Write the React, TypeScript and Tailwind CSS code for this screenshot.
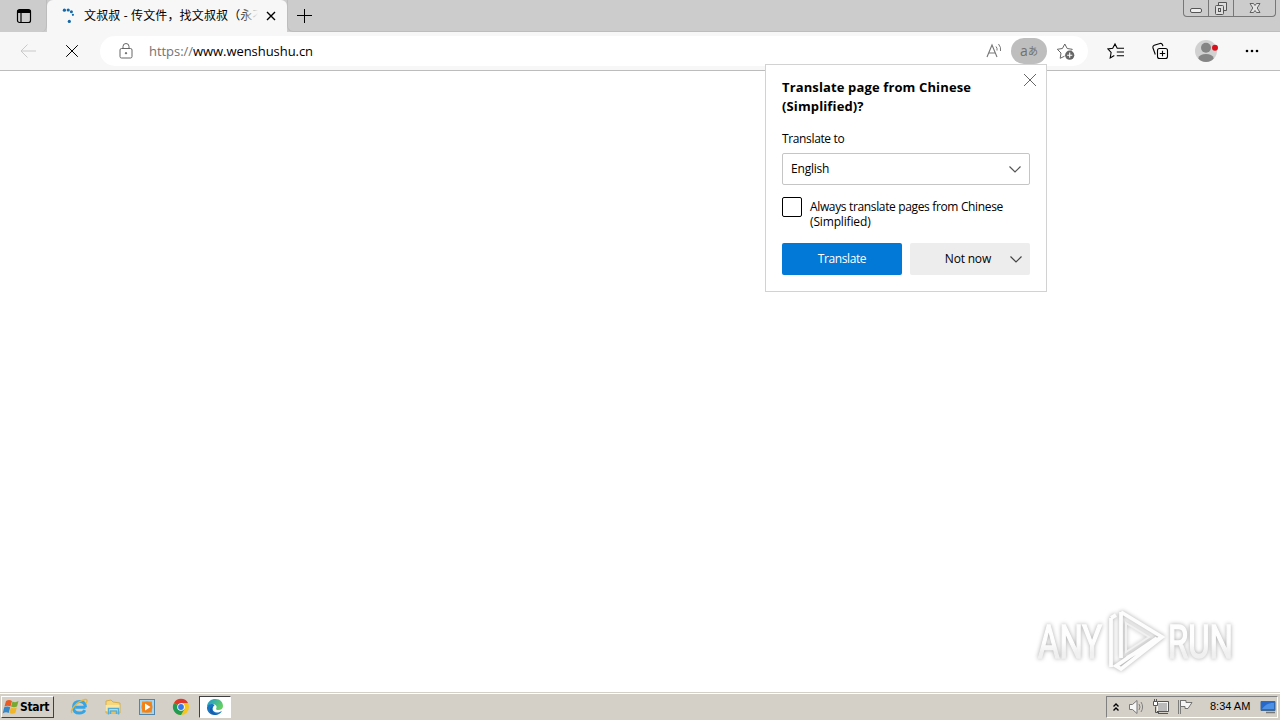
import type { ReactNode } from "react";

function Icon({
  size = 16,
  className = "",
  children,
}: {
  size?: number;
  className?: string;
  children: ReactNode;
}) {
  return (
    <svg
      width={size}
      height={size}
      viewBox={`0 0 ${size} ${size}`}
      fill="none"
      stroke="currentColor"
      className={`shrink-0 ${className}`}
    >
      {children}
    </svg>
  );
}

function TabStrip() {
  return (
    <div className="flex h-8 shrink-0 bg-[#cccccc]">
      <div className="flex w-[47px] items-center justify-center rounded-br-md border-r border-[#bdbdbd]">
        <Icon className="ml-px text-black">
          <rect x="1.5" y="1.5" width="13" height="13" rx="2" strokeWidth="1.2" />
          <path d="M1.5 3.5h13" strokeWidth="3" />
          <path d="M5 4v10" strokeWidth="1.2" />
        </Icon>
      </div>
      <div className="flex w-[240px] items-center rounded-t-md bg-[#f7f7f7] pl-3">
        <Icon className="text-[#1368aa]">
          <g fill="currentColor" stroke="none">
            <circle cx="5.4" cy="2.2" r="1.6" />
            <circle cx="9.2" cy="2" r="1.6" />
            <circle cx="12.4" cy="3.800" r="1.5" />
            <circle cx="13.900" cy="6.8" r="1.1" />
            <circle cx="10.3" cy="13.4" r="1.6" />
          </g>
        </Icon>
        <div className="relative ml-[9px] w-[174px] overflow-hidden text-[12px] leading-4 tracking-[0.15px] whitespace-nowrap text-black">
          文叔叔 - 传文件，找文叔叔（永不
          <span className="absolute inset-y-0 right-0 w-5 bg-linear-to-r from-[#f7f7f700] to-[#f7f7f7]" />
        </div>
        <Icon size={10} className="ml-2 text-black">
          <path d="M1 1l8 8M9 1L1 9" strokeWidth="1.4" />
        </Icon>
      </div>
      <div className="flex flex-1 items-start rounded-bl-md border-b border-l border-[#bdbdbd]">
        <Icon className="mt-2 ml-2 text-black">
          <path d="M8.5 1v14M1 7.500h15" strokeWidth="1" />
        </Icon>
      </div>
      <div className="flex w-[97px] items-start border-b border-[#bdbdbd]">
        <div className="flex h-[17px] w-[93px] rounded-b-[4px] border border-t-0 border-[#777] text-[#555]">
          <div className="flex w-[25px] justify-center border-r border-[#777]">
            <Icon>
              <rect x="2.5" y="8.5" width="11" height="4" rx="1.5" fill="#eee" />
            </Icon>
          </div>
          <div className="flex w-[25px] justify-center border-r border-[#777]">
            <Icon>
              <path d="M5.500 5.500v-3h8v8h-3" fill="#ddd" />
              <rect x="2.5" y="5.5" width="8" height="9" rx="1" fill="#ddd" />
              <rect x="5.500" y="8.500" width="2" height="3" />
            </Icon>
          </div>
          <div className="flex flex-1 justify-center">
            <Icon>
              <path
                d="M3 3.500h3.500L8 5.500l1.500-2H13L10.200 8l2.800 4.500H9.500L8 10.500l-1.500 2H3L5.800 8z"
                fill="#e4e4e4"
                strokeWidth=".9"
              />
            </Icon>
          </div>
        </div>
      </div>
    </div>
  );
}

function AddressBar() {
  return (
    <div className="flex h-[30px] w-[988px] items-center rounded-full bg-white pl-[18px]">
      <Icon className="text-[#666]">
        <rect x="2" y="5.500" width="12" height="9.500" rx="1.5" />
        <path d="M5 5.500V3.500a3 3 0 0 1 6 0v2" />
        <circle cx="8" cy="10.200" r=".7" fill="currentColor" />
      </Icon>
      <div className="mt-[2px] ml-[15px] w-[836px] text-[13px] tracking-[-0.05px] text-black">
        <span className="text-[#737373]">https://</span>www.wenshushu.cn
      </div>
      <Icon size={18} className="text-[#777]">
        <path d="M2 15L7 3l5 12M3.700 11h6.600" strokeWidth="1.1" />
        <path d="M11 4.500q1.500 1.800 1 4M13.500 2q2.800 3.200 2 7" />
      </Icon>
      <div className="ml-2 flex h-[26px] w-9 items-center justify-center rounded-full bg-[#bebebe] pb-px text-[#707070]">
        <span className="text-[14px]">a</span>
        <span className="mt-px text-[10px]">あ</span>
      </div>
      <Icon size={20} className="ml-[9px] text-[#666]">
        <path d="M8.500 15.200L4.200 17.300l.8-5.300-3.700-3.700 5.100-.8L8.800 3l2.400 4.500 5.100.8-1.200 1.200" />
        <circle cx="13.700" cy="14.200" r="4.600" fill="#666" stroke="none" />
        <path d="M13.700 11.600v5.200M11.100 14.200h5.200" stroke="#fff" strokeWidth="1.1" />
      </Icon>
    </div>
  );
}

function Toolbar() {
  return (
    <div className="flex h-[39px] shrink-0 items-center border-b border-[#bcbcbc] bg-[#f7f7f7]">
      <Icon className="ml-5 text-[#c9c9c9]">
        <path d="M16 8H1M7.500 1.500L1 8l6.500 6.500" />
      </Icon>
      <Icon className="mr-5 ml-7 text-black">
        <path d="M2.200 2.200l11.600 11.600M13.800 2.200L2.200 13.800" strokeWidth="1" />
      </Icon>
      <AddressBar />
      <Icon size={18} className="ml-[19px] text-black">
        <path
          d="M7.300 13.500L3.200 16l.9-5.500L1 7l4.700-.8L8 2l2.200 4.200H17M9.800 10H17M9.800 13.700H17"
          strokeWidth="1.1"
        />
      </Icon>
      <Icon size={18} className="ml-[26px] text-black">
        <rect x="6.500" y="6.500" width="10" height="10" rx="2" strokeWidth="1.1" />
        <path
          d="M11.500 8.800v5.400M8.800 11.500h5.400M4.300 12.500L1.900 5.800Q1.500 4 3.200 3.300L9 1.500q1.800-.4 2.500 1.300l.4 1.400"
          strokeWidth="1.1"
        />
      </Icon>
      <Icon size={24} className="ml-[25px]">
        <circle cx="12" cy="12" r="11" fill="#d1d1d1" stroke="none" />
        <circle cx="12" cy="8.800" r="5" fill="#858585" stroke="none" />
        <path d="M4.200 19.200Q6 15 12 15t7.800 4.200Q17 23 12 23t-7.800-3.800z" fill="#858585" stroke="none" />
        <circle cx="21" cy="8.800" r="3" fill="#d9101b" stroke="none" />
      </Icon>
      <Icon className="ml-[26px] text-black">
        <g fill="currentColor" stroke="none">
          <circle cx="3" cy="8" r="1.300" />
          <circle cx="8" cy="8" r="1.300" />
          <circle cx="13" cy="8" r="1.300" />
        </g>
      </Icon>
    </div>
  );
}

function Chevron({ className = "" }: { className?: string }) {
  return (
    <Icon size={14} className={className}>
      <path d="M1.500 4.500L7 10l5.500-5.500" strokeWidth="1.200" />
    </Icon>
  );
}

function TranslatePopup() {
  return (
    <div className="absolute top-16 left-[765px] h-[228px] w-[282px] border border-[#d2d2d2] bg-white px-4 pt-[13px] text-[12px] leading-[15px] text-black">
      <Icon size={14} className="absolute top-2 right-[9px] text-[#666]">
        <path d="M1 1l12 12M13 1L1 13" />
      </Icon>
      <h1 className="text-[13px] leading-[19px] font-bold tracking-[0.13px] whitespace-nowrap">
        Translate page from Chinese
        <br />
        (Simplified)?
      </h1>
      <div className="mt-[15px] tracking-[-0.36px]">Translate to</div>
      <div className="mt-[7px] flex h-8 items-center justify-between rounded-[2px] border border-[#c5c5c5] pr-[7px] pl-2">
        <span className="pb-px tracking-[-0.2px]">English</span>
        <Chevron className="text-[#555]" />
      </div>
      <div className="mt-3 flex gap-2">
        <span className="h-5 w-5 shrink-0 rounded-[2px] border border-black" />
        <div className="mt-[2px] whitespace-nowrap">
          <span className="tracking-[-0.35px]">Always translate pages from Chinese</span>
          <br />
          <span className="tracking-[-0.15px]">(Simplified)</span>
        </div>
      </div>
      <div className="mt-[14px] flex gap-2">
        <button className="h-8 w-[120px] rounded-[2px] bg-[#0278d7] pb-px tracking-[-0.4px] text-white">
          Translate
        </button>
        <button className="flex h-8 w-[120px] items-center justify-end rounded-[2px] bg-[#ededed] pr-[7px]">
          <span className="pb-px tracking-[-0.2px]">Not now</span>
          <Chevron className="ml-[18px] text-[#444]" />
        </button>
      </div>
    </div>
  );
}

function Watermark() {
  return (
    <div className="absolute top-[605px] left-[1034px] px-1 text-[#fdfdfd] drop-shadow-[0_0_2px_#aaa]">
      <svg width="204" height="70" viewBox="0 0 204 70" fill="none" stroke="currentColor">
        <defs>
          <linearGradient id="mark-fade" x1="0" y1="0" x2="0" y2="1">
            <stop offset=".5" stopColor="#fefefe" />
            <stop offset=".7" stopColor="#f0f0f0" />
          </linearGradient>
        </defs>
        <g
          fill="url(#mark-fade)"
          stroke="url(#mark-fade)"
          strokeWidth="1.500"
          fontFamily="Roboto, 'Liberation Sans', sans-serif"
          fontSize="46"
        >
          <text x="0" y="53" textLength="64" lengthAdjust="spacingAndGlyphs">ANY</text>
          <text x="130" y="53" textLength="65" lengthAdjust="spacingAndGlyphs">RUN</text>
        </g>
        <path d="M83 7v46M83 7l41 25-35 21M73 13v49M73 13l5-3M124 32L83 64l-5-3 41-28" strokeWidth="3.800" />
        <path d="M88 18v29l23-15z" strokeWidth="2" stroke="#f1f1f1" />
      </svg>
    </div>
  );
}

function WindowsFlag() {
  return (
    <Icon size={18}>
      <g stroke="none">
        <path d="M4 3q3-2 6 0L8.500 8.500q-3-1.500-6 0z" fill="#e75b24" />
        <path d="M10.500 3.500q3 1.500 6-.5L15 8.500q-3 1.500-6 0z" fill="#79a832" />
        <path d="M2.200 9.200q3-1.500 6 0L6.700 15q-3-1.500-6 .5z" fill="#3687c8" />
        <path d="M8.800 9.500q3 1.500 6 0L13.300 15q-3 1.500-6 0z" fill="#efb52b" />
      </g>
    </Icon>
  );
}

function Taskbar() {
  return (
    <div className="flex h-7 shrink-0 items-center border-t border-[#d4d0c8] bg-[#d4d0c8] shadow-[inset_0_1px_0_#fff]">
      <button className="ml-px flex h-[22px] w-[53px] items-center border border-t-white border-r-[#404040] border-b-[#404040] border-l-white font-['DejaVu_Sans_Condensed','DejaVu_Sans',sans-serif] text-[12px] font-bold tracking-[-0.3px] text-black">
        <WindowsFlag />
        <span className="mt-px">Start</span>
      </button>
      <Icon size={18} className="ml-4">
        <path d="M15.500 9.300H5.200M15.500 9.300q-.2-5.800-6-5.800t-6 5.800 6 5.800q3.800 0 5.300-3" stroke="#36a5e5" strokeWidth="3" />
        <path d="M2 15Q0 13 4.500 8T15 1.500q3.500-.5 1 4" stroke="#e4b63e" strokeWidth="1.300" />
      </Icon>
      <Icon size={18} className="ml-4">
        <path d="M2 3l5-1 2 2 7 1v10H2z" fill="#f5d780" stroke="#d6ae4a" />
        <path d="M1.500 7h14v6h-14z" fill="#f8e6a5" stroke="none" />
        <path d="M4.500 16.500v-6h10v6M6.500 16v-3h6v3" stroke="#55add5" strokeWidth="1.500" />
      </Icon>
      <Icon size={18} className="ml-4">
        <rect x="1.500" y="1.500" width="15" height="15" fill="#a7d5ef" stroke="#5185ac" />
        <rect x="4" y="3.500" width="10" height="11" fill="#f38e19" stroke="none" />
        <circle cx="9" cy="9" r="5.500" fill="#f18219" stroke="none" />
        <path d="M7 5.500l5.500 3.500L7 12.500z" fill="#fff" stroke="none" />
      </Icon>
      <Icon size={18} className="ml-4">
        <g stroke="none">
          <circle cx="9" cy="9" r="8" fill="#f4c61e" />
          <path d="M9 9L2 5A8 8 0 0 1 16 5H9z" fill="#df382c" />
          <path d="M9 9L2 5A8 8 0 0 0 9 17l3.500-6z" fill="#239b50" />
          <circle cx="9" cy="9" r="3.800" fill="#fff" />
          <circle cx="9" cy="9" r="2.900" fill="#3978e8" />
        </g>
      </Icon>
      <div className="ml-[9px] flex h-[22px] w-8 items-center justify-center border border-t-[#404040] border-r-white border-b-white border-l-[#404040] bg-white">
        <svg width="18" height="18" viewBox="0 0 18 18">
          <defs>
            <linearGradient id="edge-top" x1="0" y1="0" x2="1" y2=".5">
              <stop stopColor="#1799d8" />
              <stop offset="1" stopColor="#64cf60" />
            </linearGradient>
          </defs>
          <path d="M1 8.500C1.500 3.500 5 1 9.500 1c5 0 7.500 3.500 7.500 7 0 2.500-2 4-4.500 4-2 0-3-.8-2.200-1.800C12 7.500 7 3.800 1 8.500z" fill="url(#edge-top)" />
          <path d="M1 9c1-3 6-4 7.500-1.500-3 1.500-2.500 7 2.500 7 2 0 3.500-.7 5-1.500-1.500 2.700-4 4-7 4-5 0-8.300-3.500-8-8z" fill="#1576c4" />
          <path d="M7 8.500c-2.500 3 0 7.800 5 8-2 .8-5 .7-7-1.500-2-2.400-1-5.500 2-6.500z" fill="#1a5aa6" />
        </svg>
      </div>
      <div className="mr-[2px] ml-auto flex h-[22px] w-[172px] items-center border border-t-[#808080] border-r-white border-b-white border-l-[#808080] pl-[5px] text-black">
        <Icon size={8}>
          <path d="M1.500 3.500L4 1l2.500 2.500M1.500 7.500L4 5l2.500 2.500" strokeWidth="1.400" />
        </Icon>
        <Icon size={18} className="ml-2 text-[#777]">
          <path d="M1.500 6.500h3L9 2.500v13l-4.500-4h-3z" fill="#f7f7f7" />
          <path d="M11 6q2 3 0 6M13 4q3.200 5 0 10" strokeWidth=".9" />
        </Icon>
        <Icon size={18} className="ml-[6px] text-[#555]">
          <rect x="5.500" y="4.500" width="10" height="9" fill="#bbb" stroke="#f5f5f5" />
          <path d="M6 3.500h10.500v10H5M6 15.500h10M3.500 8.500v6H7" />
          <path d="M1.500 3.500h4v4h-4zM2.500 1v2M4.500 1v2" fill="#fff" />
        </Icon>
        <Icon size={18} className="ml-[6px] text-[#666]">
          <path d="M2.500 2v14M4.500 2v14" strokeWidth=".8" />
          <path d="M4.500 2.500H10v2h6l-2 3-2 3H9v-2H4.500z" fill="#f5f5f5" strokeWidth=".9" />
        </Icon>
        <span className="ml-[16px] w-[44px] font-['Liberation_Sans',sans-serif] text-[11px] whitespace-nowrap">
          8:34 AM
        </span>
        <Icon size={16} className="ml-[6px]">
          <path d="M1 2.500h14v9H1z" fill="#2868c8" stroke="#416992" />
          <path d="M2 10Q7 3 14 4v6z" fill="#4c91e6" stroke="none" />
          <path d="M6 13.500h9" stroke="#777" strokeWidth="1.500" />
        </Icon>
      </div>
    </div>
  );
}

export default function App() {
  return (
    <div className="relative flex h-[720px] w-[1280px] flex-col overflow-hidden bg-white font-['Open_Sans','Noto_Sans_CJK_SC',sans-serif]">
      <TabStrip />
      <Toolbar />
      <main className="flex-1 bg-white" />
      <Taskbar />
      <TranslatePopup />
      <Watermark />
    </div>
  );
}
